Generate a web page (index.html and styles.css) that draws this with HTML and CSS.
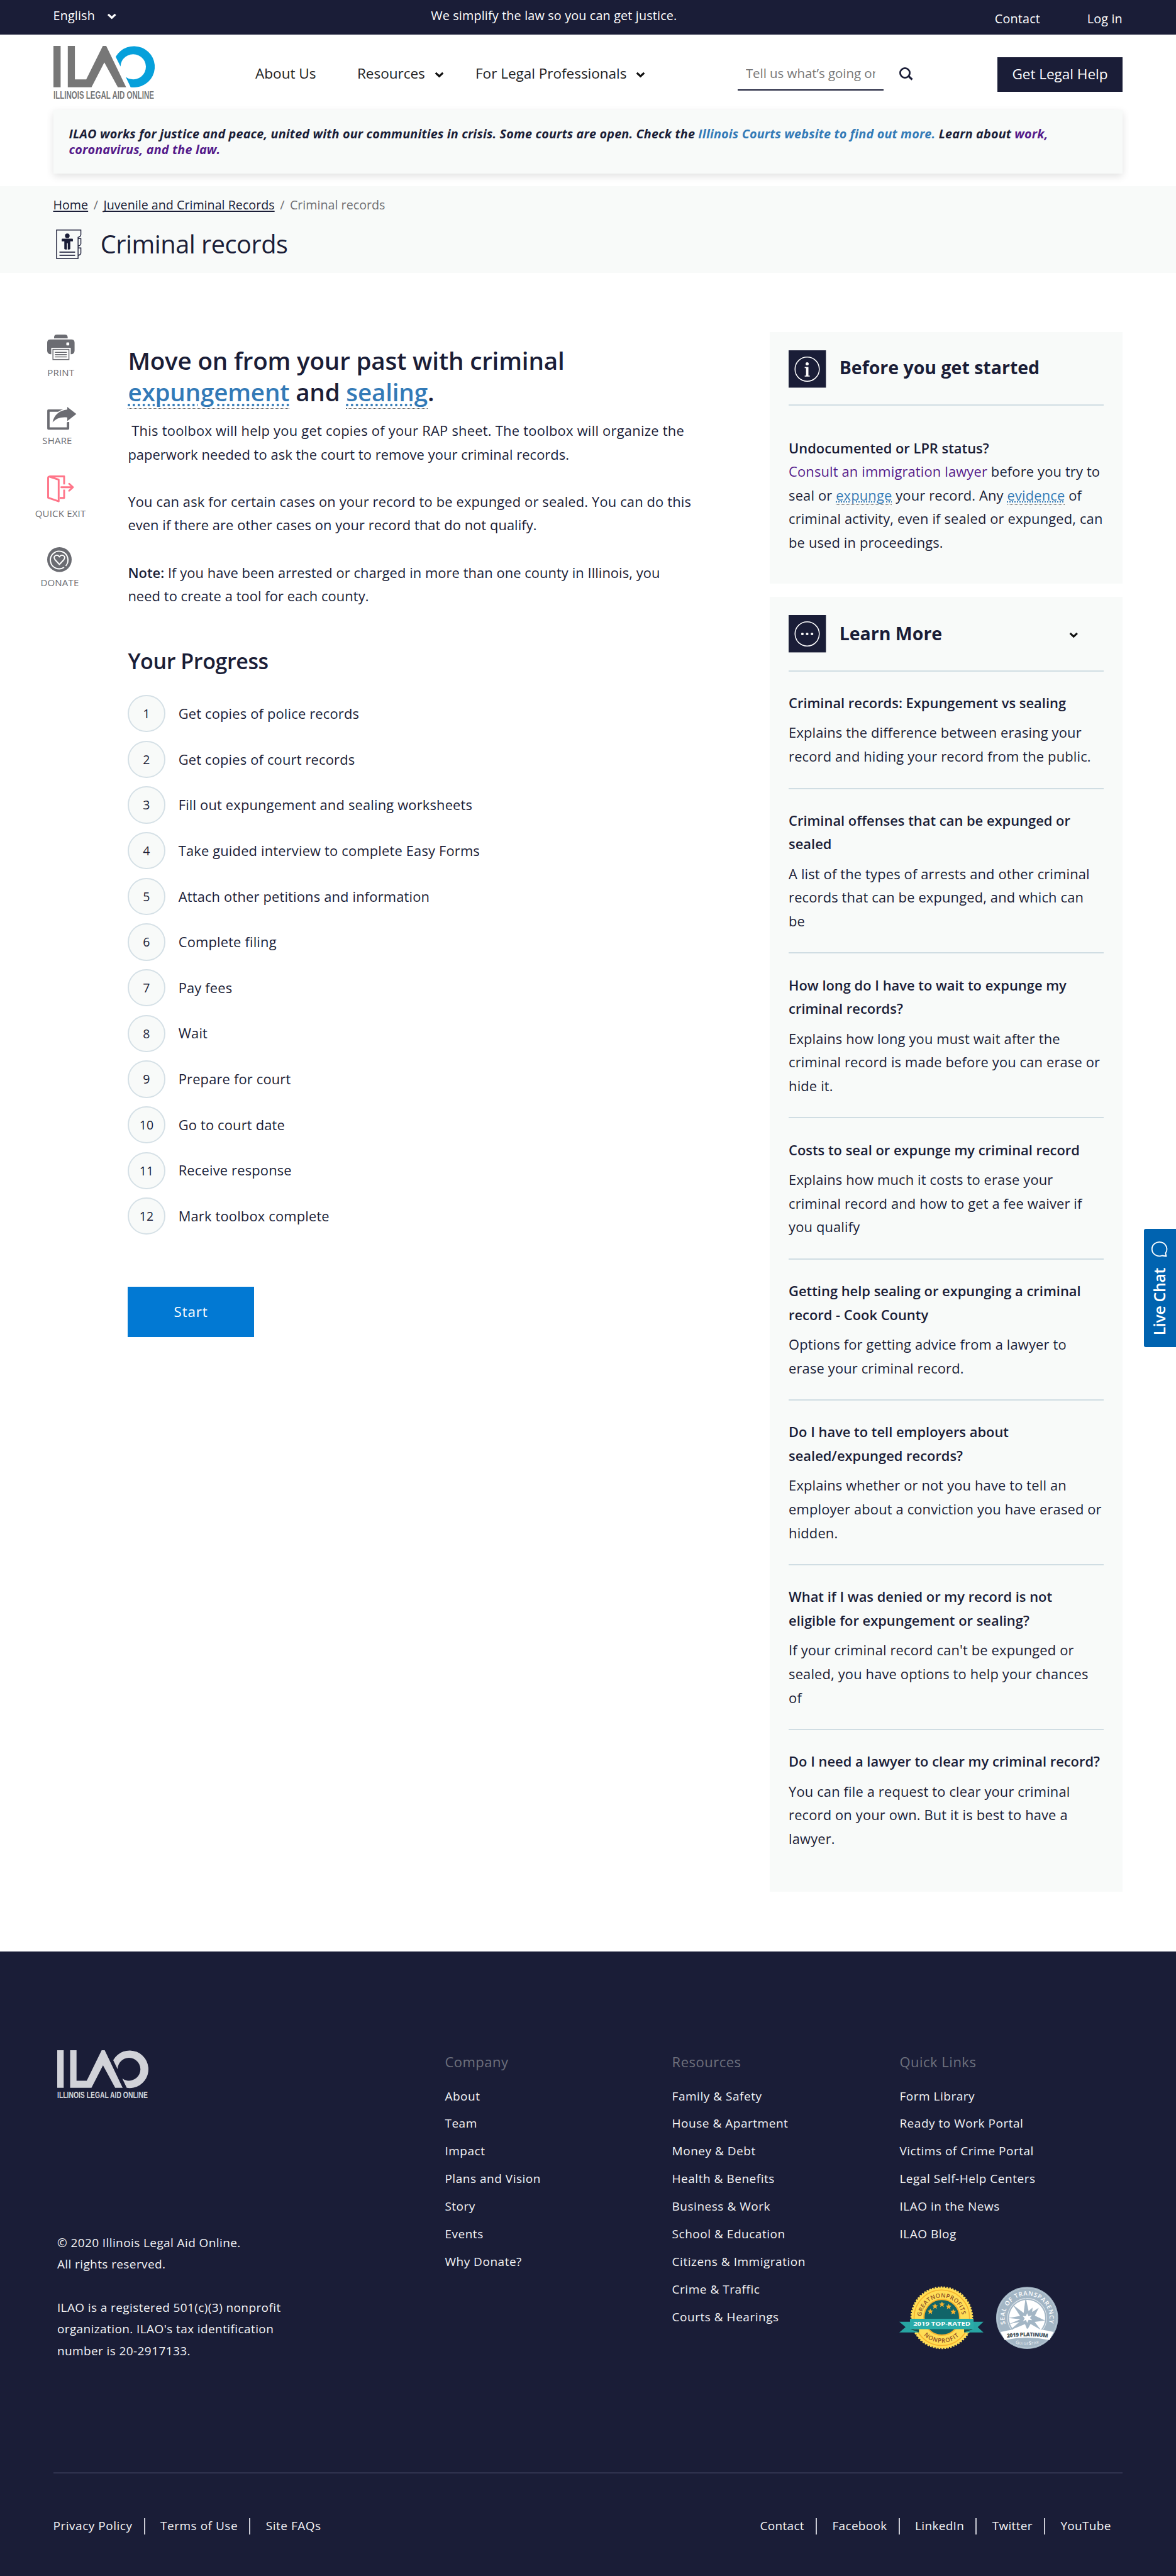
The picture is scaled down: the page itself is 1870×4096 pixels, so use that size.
FILE: index.html
```
<!DOCTYPE html>
<html lang="en">
<head>
<meta charset="utf-8">
<title>Criminal records | Illinois Legal Aid Online</title>
<link rel="stylesheet" href="styles.css">
</head>
<body>
<svg width="0" height="0" class="defs" aria-hidden="true">
  <symbol id="chevron" viewBox="0 0 15 9.5"><path d="M1.7 1.8 7.5 7.2 13.3 1.8" fill="none" stroke="currentColor" stroke-width="3.2"/></symbol>
  <path id="star" d="M0-18 5-6.5 17.5-5.5 8 3 11 15.5 0 9-11 15.5-8 3-17.5-5.5-5-6.5Z"/>
</svg>

<div class="topbar">
  <div class="lang">English <svg class="chev" width="15.5" height="9.5"><use href="#chevron"/></svg></div>
  <div class="tagline">We simplify the law so you can get justice.</div>
  <nav class="account"><a>Contact</a><a>Log in</a></nav>
</div>

<header class="header">
  <svg class="logo" width="160" height="85" viewBox="0 0 160 86" preserveAspectRatio="none">
    <path fill="#777" d="M0 0H11.4V66.4H0ZM22.8 0H34.1V54H52.1L78.5 0H83.9L115.6 66.4H102.4L80.9 26.6 60.5 66.4H22.8Z"/>
    <path fill="#06a0db" d="M98.9 17.5A33.2 33.2 0 1 1 122.8 66.4L115 50A20.2 20.2 0 1 0 106.6 33.2Z"/>
    <text class="logo-text" x="0" y="85.4" textLength="160" lengthAdjust="spacingAndGlyphs" fill="#777">ILLINOIS LEGAL AID ONLINE</text>
  </svg>
  <a>About Us</a>
  <a class="menu">Resources <svg class="chev" width="15" height="9.5"><use href="#chevron"/></svg></a>
  <a class="menu">For Legal Professionals <svg class="chev" width="15" height="9.5"><use href="#chevron"/></svg></a>
  <div class="search"><span>Tell us what’s going on</span></div>
  <svg class="magnify" width="22" height="21" viewBox="0 0 22 21"><circle cx="9" cy="9" r="7.6" fill="none" stroke="#1a1d37" stroke-width="2.8"/><path d="M14.3 13.8 20.5 19.5" stroke="#1a1d37" stroke-width="3.2"/></svg>
  <a class="help">Get Legal Help</a>
</header>

<div class="alert">ILAO works for justice and peace, united with our communities in crisis. Some courts are open. Check the <a class="blue">Illinois Courts website to find out more.</a> Learn about <a class="purple">work,<br>coronavirus, and the law.</a></div>

<section class="band">
  <div class="crumbs"><a>Home</a><span>/</span><a>Juvenile and Criminal Records</a><span>/</span><span>Criminal records</span></div>
  <div class="title-row">
    <svg width="41.5" height="47" viewBox="0 0 41.5 47.5" fill="none" stroke="#1a1d37" stroke-width="1.4">
      <path d="M.7.7H39.8V8.5Q39.5 11.5 35.3 12.5V46.5H.7Z"/>
      <path d="M35.3 14.5H39.8V23Q39.5 25.5 35.3 26.5M35.3 29.5H39.8V38Q39.5 40.5 35.3 41.5"/>
      <circle cx="18" cy="10" r="3.7" fill="#1a1d37" stroke="none"/>
      <path fill="#1a1d37" stroke="none" d="M10 14.7H26Q27 14.7 27 15.7V19H22.8V31.2Q22.8 32 21 32H18.8V22H17.4V32H15Q13.2 32 13.2 31.2V19H9V15.7Q9 14.7 10 14.7Z"/>
      <path d="M5.4 36.2H30.5M5.4 41.2H30.5" stroke-width="1.8"/>
    </svg>
    <h1>Criminal records</h1>
  </div>
</section>

<main class="main">
  <aside class="rail">
    <div class="tool print">
      <svg width="43.6" height="40.4" viewBox="0 0 43.6 40.4" fill="#6b6c72"><path d="M11 6V4.5Q11 0 15.5 0H28Q32.6 0 32.6 4.5V6Z"/><path d="M5 7.8H38.6Q43.6 7.8 43.6 13V25.5Q43.6 31.3 37.5 31.3V21H6.5V31.3Q0 31.3 0 25.5V13Q0 7.8 5 7.8Z"/><rect x="30.5" y="12.6" width="4.6" height="4.6" rx=".8" fill="#fff"/><rect x="9.2" y="23.6" width="25.4" height="16.1" fill="#fff" stroke="#6b6c72" stroke-width="1.5"/><path d="M12.3 28.2H31.3M12.3 31.9H31.3M12.3 35.5H31.3" stroke="#6b6c72" stroke-width="1.6"/></svg>
      <span>PRINT</span>
    </div>
    <div class="tool share">
      <svg width="46.4" height="36.4" viewBox="0 0 46.4 36.4"><path d="M26 5.9H2V34.3H33.2V24" fill="none" stroke="#6b6c72" stroke-width="3.8" stroke-linejoin="round"/><path d="M46.4 11.2 32 0V4.2C20 5 10.5 13 8.6 24.6 14 18.5 22 15.5 32 16.8V22.4Z" fill="#6b6c72" stroke="#fff" stroke-width="3" paint-order="stroke"/></svg>
      <span>SHARE</span>
    </div>
    <div class="tool exit">
      <svg width="42.6" height="42.8" viewBox="0 0 42.6 42.8" fill="none" stroke="#ff7589" stroke-width="2.9" stroke-linejoin="round"><path d="M3.5 1.5H27V14.3M27 22.5V35.8H20"/><path d="M1.5 4Q1.5 1.5 4 2L18.3 6.7V41.2L1.5 35.4Z"/><path d="M22.5 18.8H40M35 13.3 41 18.8 35 24.3" stroke-linecap="round"/></svg>
      <span>QUICK EXIT</span>
    </div>
    <div class="tool donate">
      <svg width="39" height="39.6" viewBox="0 0 39 39.6"><ellipse cx="19.5" cy="19.8" rx="19.5" ry="19.8" fill="#6b6c72"/><path d="M27 32A14 14 0 1 1 29.5 29.8" fill="none" stroke="#fff" stroke-width="1.9"/><path d="M19.5 27.5 12.5 20Q9.5 15.5 13 13.5 17 11.5 19.5 15.5 22 11.5 26 13.5 29.5 15.5 26.5 20Z" fill="none" stroke="#fff" stroke-width="1.9" stroke-linejoin="round"/></svg>
      <span>DONATE</span>
    </div>
  </aside>

  <article class="content">
    <h2>Move on from your past with criminal<br><a class="term">expungement</a> and <a class="term">sealing</a>.</h2>
    <p><span class="looser">&nbsp;This toolbox will help you get copies of your RAP sheet. The toolbox will organize the</span><br><span class="tighter">paperwork needed to ask the court to remove your criminal records.</span></p>
    <p>You can ask for certain cases on your record to be expunged or sealed. You can do this<br><span class="tighter">even if there are other cases on your record that do not qualify.</span></p>
    <p class="tighter"><b>Note:</b> If you have been arrested or charged in more than one county in Illinois, you<br>need to create a tool for each county.</p>
    <h3>Your Progress</h3>
    <ol class="steps">
      <li><i>1</i>Get copies of police records</li>
      <li><i>2</i>Get copies of court records</li>
      <li><i>3</i>Fill out expungement and sealing worksheets</li>
      <li><i>4</i>Take guided interview to complete Easy Forms</li>
      <li><i>5</i>Attach other petitions and information</li>
      <li><i>6</i>Complete filing</li>
      <li><i>7</i>Pay fees</li>
      <li><i>8</i>Wait</li>
      <li><i>9</i>Prepare for court</li>
      <li><i>10</i>Go to court date</li>
      <li><i>11</i>Receive response</li>
      <li><i>12</i>Mark toolbox complete</li>
    </ol>
    <a class="start">Start</a>
  </article>

  <aside class="side">
    <section class="card before">
      <div class="card-head">
        <svg width="59.4" height="59.4" viewBox="0 0 59.4 59.4"><rect width="59.4" height="59.4" fill="#1a1d37"/><circle cx="29.5" cy="30" r="19.3" fill="none" stroke="#fff" stroke-width="1.5"/><circle cx="29.5" cy="21.5" r="2.5" fill="#fff"/><path fill="#fff" d="M25.6 26.6H31.5V40.2H33.6V41.8H25.6V40.2H27.7V28.2H25.6Z"/></svg>
        <h4>Before you get started</h4>
      </div>
      <p><b>Undocumented or LPR status?</b><br><a class="purple">Consult an immigration lawyer</a> before you try to<br>seal or <a class="term">expunge</a> your record. Any <a class="term">evidence</a> of<br>criminal activity, even if sealed or expunged, can<br>be used in proceedings.</p>
    </section>

    <section class="card learn">
      <div class="card-head">
        <svg width="59.4" height="59.4" viewBox="0 0 59.4 59.4"><rect width="59.4" height="59.4" fill="#1a1d37"/><circle cx="29.5" cy="30" r="19.3" fill="none" stroke="#fff" stroke-width="1.5"/><g fill="#fff"><circle cx="21.9" cy="30" r="2.1"/><circle cx="29.5" cy="30" r="2.1"/><circle cx="37.2" cy="30" r="2.1"/></g></svg>
        <h4>Learn More</h4>
        <svg class="chev" width="14.5" height="9.5"><use href="#chevron"/></svg>
      </div>
      <div class="item"><h5>Criminal records: Expungement vs sealing</h5><p>Explains the difference between erasing your<br>record and hiding your record from the public.</p></div>
      <div class="item"><h5>Criminal offenses that can be expunged or<br>sealed</h5><p>A list of the types of arrests and other criminal<br>records that can be expunged, and which can<br>be</p></div>
      <div class="item"><h5>How long do I have to wait to expunge my<br>criminal records?</h5><p>Explains how long you must wait after the<br>criminal record is made before you can erase or<br>hide it.</p></div>
      <div class="item"><h5>Costs to seal or expunge my criminal record</h5><p>Explains how much it costs to erase your<br>criminal record and how to get a fee waiver if<br>you qualify</p></div>
      <div class="item"><h5>Getting help sealing or expunging a criminal<br>record - Cook County</h5><p>Options for getting advice from a lawyer to<br>erase your criminal record.</p></div>
      <div class="item"><h5>Do I have to tell employers about<br>sealed/expunged records?</h5><p>Explains whether or not you have to tell an<br>employer about a conviction you have erased or<br>hidden.</p></div>
      <div class="item"><h5>What if I was denied or my record is not<br>eligible for expungement or sealing?</h5><p>If your criminal record can't be expunged or<br>sealed, you have options to help your chances<br>of</p></div>
      <div class="item"><h5>Do I need a lawyer to clear my criminal record?</h5><p>You can file a request to clear your criminal<br>record on your own. But it is best to have a<br>lawyer.</p></div>
    </section>
  </aside>
</main>

<footer class="footer">
  <div class="foot-grid">
    <div>
      <svg class="foot-logo" width="144" height="76" viewBox="0 0 160 84.4" fill="#d1d2d8">
        <path d="M0 0H11.4V66.4H0ZM22.8 0H34.1V54H52.1L78.5 0H83.9L115.6 66.4H102.4L80.9 26.6 60.5 66.4H22.8Z"/>
        <path d="M98.9 17.5A33.2 33.2 0 1 1 122.8 66.4L115 50A20.2 20.2 0 1 0 106.6 33.2Z"/>
        <text class="logo-text" x="0" y="84" textLength="160" lengthAdjust="spacingAndGlyphs">ILLINOIS LEGAL AID ONLINE</text>
      </svg>
      <p>© 2020 Illinois Legal Aid Online.<br>All rights reserved.</p>
      <p>ILAO is a registered 501(c)(3) nonprofit<br>organization. ILAO's tax identification<br>number is 20-2917133.</p>
    </div>
    <div class="links"><h6>Company</h6><a>About</a><a>Team</a><a>Impact</a><a>Plans and Vision</a><a>Story</a><a>Events</a><a>Why Donate?</a></div>
    <div class="links"><h6>Resources</h6><a>Family &amp; Safety</a><a>House &amp; Apartment</a><a>Money &amp; Debt</a><a>Health &amp; Benefits</a><a>Business &amp; Work</a><a>School &amp; Education</a><a>Citizens &amp; Immigration</a><a>Crime &amp; Traffic</a><a>Courts &amp; Hearings</a></div>
    <div class="links"><h6>Quick Links</h6><a>Form Library</a><a>Ready to Work Portal</a><a>Victims of Crime Portal</a><a>Legal Self-Help Centers</a><a>ILAO in the News</a><a>ILAO Blog</a>
      <svg class="badges" width="253.1" height="102.3" viewBox="80 70 970 392">
        <circle cx="339" cy="267" r="185" fill="#ffdd55"/>
        <circle cx="339" cy="267" r="186.5" fill="none" stroke="#ffdd55" stroke-width="9" stroke-dasharray="10 7.76"/>
        <circle cx="339" cy="267" r="169" fill="none" stroke="#f6b32f" stroke-width="6"/>
        <circle cx="339" cy="264" r="109" fill="#116468" stroke="#f6b32f" stroke-width="8"/>
        <path id="arc1" fill="none" d="M215.3 258.4A124 124 0 0 1 462.7 258.4"/>
        <path id="arc2" fill="none" d="M230 373A152 152 0 0 0 448 373"/>
        <g class="seal-text" fill="#8f4f27" font-size="36" font-weight="600">
          <text textLength="362"><textPath href="#arc1" textLength="362">GREATNONPROFITS</textPath></text>
          <text textLength="236"><textPath href="#arc2" textLength="236">NONPROFIT</textPath></text>
        </g>
        <g fill="#f6b32f"><use href="#star" x="269" y="229"/><use href="#star" x="298" y="197"/><use href="#star" x="340" y="186"/><use href="#star" x="381" y="199"/><use href="#star" x="409" y="231"/></g>
        <path fill="#27a5a3" d="M80 291H150V336L200 356H80L118 324ZM593 291H525V336L475 356H593L558 324Z"/>
        <path fill="#0d5154" d="M148 336H200V356ZM530 336H475V356Z"/>
        <path fill="#2aaba8" d="M145 273H533V336H145Z"/>
        <text class="seal-text" x="165" y="315" textLength="348" lengthAdjust="spacingAndGlyphs" font-size="36" font-weight="700" fill="#fff">2019 TOP-RATED</text>

        <circle cx="859" cy="268" r="189" fill="#a3b6c5"/>
        <circle cx="859" cy="268" r="182" fill="none" stroke="#c3d0da" stroke-width="3"/>
        <circle cx="859" cy="268" r="119" fill="none" stroke="#dfe6ec" stroke-width="4"/>
        <circle cx="859" cy="268" r="110" fill="#fff"/>
        <path fill="#a3b6c5" d="M850 142 868 226 892 205 890 232 930 206 906 254 968 284 905 292 942 340 880 305 860 340 846 306 752 344 812 292 748 306 818 276 745 268 816 256 772 188 838 238Z"/>
        <path fill="#fff" d="M859 240 868 258 888 252 876 268 890 282 868 280 859 298 852 280 834 288 844 270 832 256 851 258Z"/>
        <path fill="#fff" d="M697 354Q859 312 1021 354L996 402Q859 374 722 402Z"/>
        <path id="arc3" fill="none" d="M727.3 305.8A137 137 0 1 1 990.7 305.8"/>
        <path id="arc4" fill="none" d="M736 388Q862 373 990 388"/>
        <path id="arc5" fill="none" d="M787 424Q860 444 935 422"/>
        <text class="seal-text" font-size="37" font-weight="600" fill="#fff" textLength="500"><textPath href="#arc3" textLength="500">SEAL OF TRANSPARENCY</textPath></text>
        <text class="seal-text" font-size="33" font-weight="800" fill="#44535d" textLength="250"><textPath href="#arc4" textLength="250">2019 PLATINUM</textPath></text>
        <text class="seal-text" font-size="30" fill="#eef2f5" textLength="146"><textPath href="#arc5" textLength="146">G<tspan font-size="22">UIDE</tspan><tspan font-weight="700">S</tspan><tspan font-size="22">TAR</tspan></textPath></text>
      </svg>
    </div>
  </div>
  <div class="legal">
    <nav><a>Privacy Policy</a><a>Terms of Use</a><a>Site FAQs</a></nav>
    <nav class="social"><a>Contact</a><a>Facebook</a><a>LinkedIn</a><a>Twitter</a><a>YouTube</a></nav>
  </div>
</footer>

<div class="chat"><span>Live Chat</span>
  <svg width="26" height="27" viewBox="0 0 26 27"><path d="M24.5 25.5 23.3 20.5A11.8 11.2 0 1 0 18 24.5Z" fill="none" stroke="#fff" stroke-width="1.8" stroke-linejoin="round"/></svg>
</div>
</body>
</html>
```
FILE: styles.css
```
* { box-sizing: border-box; }
body { margin: 0; position: relative; width: 1870px; height: 4096px; overflow: hidden; background: #fff; color: #1a1d37; font-family: "Open Sans", "Noto Sans", sans-serif; font-size: 21.9px; line-height: 37.57px; letter-spacing: .15px; white-space: nowrap; }
h1, h2, h3, h4, h5, h6, p, ol { margin: 0; padding: 0; }
svg { display: block; flex: none; overflow: visible; }
.defs { position: absolute; }
.blue { color: #337ab7; }
.purple { color: #551a8b; }
.chev { display: inline-block; }
b { font-weight: 600; letter-spacing: 0; }
.looser { letter-spacing: .25px; }
.tighter { letter-spacing: .06px; }

.topbar { display: flex; height: 54.8px; padding: 0 85.1px 0 84.5px; background: #1a1d37; color: #fff; font-size: 19.8px; line-height: 50.6px; }
.lang { display: flex; align-items: center; gap: 18.6px; width: 600.8px; height: 50.6px; }
.lang .chev { margin-top: 1px; }
.account { display: flex; gap: 74.8px; margin-left: auto; line-height: 59.6px; }

.header { display: grid; grid-template-columns: 321.6px 161.8px 188.1px 416.9px 231.7px 181.5px 198.8px; align-items: center; height: 120.4px; padding: 3px 0 0 84.5px; color: #222; font-size: 22.6px; letter-spacing: -.05px; }
.logo { align-self: start; margin-top: 15.7px; }
.logo-text { font: 700 17.2px "Liberation Sans Narrow", "Liberation Sans", sans-serif; letter-spacing: 0; }
.menu { display: flex; align-items: center; gap: 15px; }
.menu .chev { margin-top: 4px; color: #111; }
.search { height: 53.5px; margin-top: 1.4px; padding: 0 12px 0 13px; border-bottom: 2px solid #1a1d37; color: #777; font-size: 20.5px; line-height: 53px; }
.search span { display: block; overflow: hidden; width: 206.5px; }
.magnify { margin-left: 25.2px; margin-top: 2px; }
.help { height: 54.8px; margin-top: 3.4px; background: #1a1d37; color: #fff; line-height: 54.8px; text-align: center; }

.alert { width: 1700.4px; height: 100.4px; margin-left: 84.5px; padding: 25.5px 25.1px 0; background: #f8faf9; box-shadow: 0 4px 12px rgba(0, 0, 0, .12); font-size: 19.8px; font-style: italic; font-weight: 700; line-height: 24.9px; letter-spacing: .16px; }

.band { height: 137.9px; margin-top: 20.1px; padding: 15.1px 84.5px 0; background: #f8faf9; }
.crumbs { display: flex; gap: 8.5px; color: #707074; font-size: 19.7px; line-height: 30px; letter-spacing: 0; }
.crumbs a { color: #1a1d37; text-decoration: underline; text-decoration-thickness: 1.6px; text-underline-offset: 2px; text-decoration-skip-ink: none; }
.title-row { display: flex; align-items: center; gap: 29px; height: 50px; margin: 22.7px 0 0 4.8px; }
h1 { font-size: 39.7px; font-weight: 400; line-height: 50px; letter-spacing: -.5px; }

.main { display: grid; grid-template-columns: 147.7px 1020.6px 560.7px; align-items: start; padding: 94px 0 95.3px 55.7px; }
.rail { padding-top: 4.6px; color: #6b6c72; font-size: 15px; line-height: 20px; letter-spacing: .2px; }
.tool svg { margin-left: 19.6px; }
.tool span { display: block; }
.print span { margin: 9.4px 0 45px 19.6px; }
.share span { margin: 6.9px 0 46px 11.6px; }
.exit span { margin: 6.9px 0 44px; }
.donate span { margin: 6.3px 0 0 8.7px; }

.content { padding-top: 20.2px; }
h2 { margin-bottom: 17.9px; font-size: 38.6px; font-weight: 600; line-height: 50.3px; letter-spacing: -.18px; }
.term { border-bottom: 1.4px dotted #555; color: #337ab7; text-decoration: underline dotted 2px; text-underline-offset: 2px; }
h2 .term { text-decoration-thickness: 3.5px; text-underline-offset: 4px; }
.content p { margin-bottom: 37.57px; }
h3 { margin: 58.8px 0 29.6px; font-size: 34px; font-weight: 600; line-height: 50px; letter-spacing: -.4px; }
.steps { display: grid; gap: 13.35px; list-style: none; }
.steps li { display: flex; align-items: center; gap: 21px; height: 59.3px; letter-spacing: .17px; }
.steps i { width: 59.3px; height: 59.3px; border: 2px solid #d5e0e6; border-radius: 50%; background: #f8faf9; font-size: 19.5px; font-style: normal; line-height: 56px; text-align: center; }
.start { display: block; width: 200.3px; height: 79.6px; margin-top: 82.6px; background: #0279d3; color: #fff; font-size: 22.4px; line-height: 79.6px; letter-spacing: .8px; text-align: center; }

.side { display: grid; gap: 20.3px; }
.card { padding: 29.6px 29.6px 0 30.1px; background: #f8faf9; }
.card-head { display: flex; align-items: center; gap: 21.2px; border-bottom: 2px solid #d0dde3; }
h4 { font-size: 28.5px; font-weight: 700; letter-spacing: 0; }
.before { height: 400.8px; }
.before .card-head { height: 87.6px; padding-bottom: 26.2px; }
.before h4 { margin-top: -3.5px; }
.before p { margin-top: 48.9px; }
.learn { height: 2059.4px; }
.learn .card-head { height: 89.4px; padding-bottom: 28px; }
.learn .chev { margin-left: auto; margin-right: 41px; margin-top: 3px; color: #111; }
.item { padding: 31.1px 0 31.2px; border-bottom: 2px solid #d0dde3; }
.item:last-child { border-bottom: 0; }
h5 { margin-bottom: 9.9px; font-size: 21.9px; font-weight: 600; letter-spacing: 0; }

.footer { height: 992.6px; padding: 156.6px 85.1px 0 84.5px; background: #1a1d37; color: #f4f4f6; font-size: 19px; letter-spacing: .52px; }
.foot-grid { display: grid; grid-template-columns: 616.5px 361.2px 361.8px 1fr; height: 673.5px; padding-left: 6.4px; border-bottom: 2px solid #30334f; }
.foot-logo { margin-bottom: 212.8px; }
.foot-grid p { margin-bottom: 34.4px; line-height: 34.4px; letter-spacing: .4px; }
.links { padding-top: 1.4px; line-height: 43.87px; }
.links a { display: block; }
h6 { margin-bottom: 16.2px; color: #6d707d; font-size: 22px; font-weight: 400; line-height: 34px; letter-spacing: .5px; }
.badges { margin-top: 59.6px; }
.seal-text { font-family: "Open Sans", sans-serif; letter-spacing: 0; }
.legal { display: flex; justify-content: space-between; padding-top: 71px; }
.legal nav { display: flex; line-height: 25.3px; }
.legal a { padding: 0 18.3px 0 24.3px; border-left: 2px solid #c9cad3; }
.legal a:first-child { padding-left: 0; border-left: 0; }
.social { letter-spacing: .3px; }

.chat { position: absolute; top: 1953.6px; right: 0; display: flex; flex-direction: column-reverse; align-items: center; justify-content: space-between; width: 51px; height: 188.3px; padding: 18px 4px 19px 0; border-radius: 3px 0 0 3px; background: #0063b0; color: #fff; }
.chat span { writing-mode: vertical-rl; transform: rotate(180deg); font-size: 25px; font-weight: 600; line-height: 34px; letter-spacing: -.4px; }
```
